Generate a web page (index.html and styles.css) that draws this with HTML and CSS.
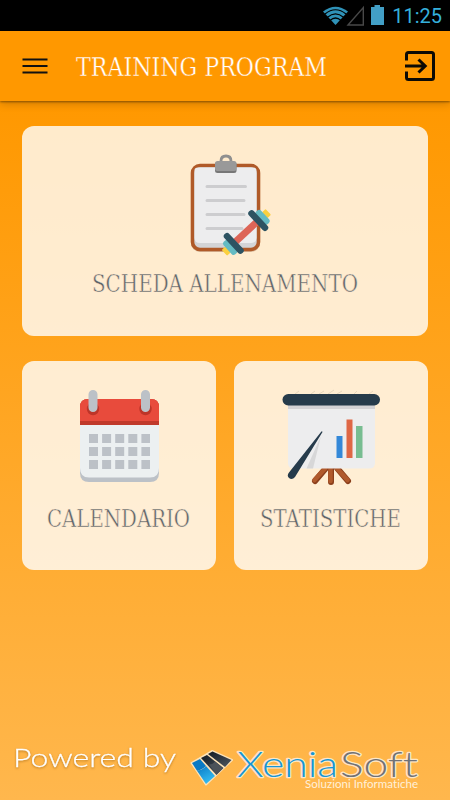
FILE: index.html
```html
<!DOCTYPE html>
<html lang="it">
<head>
    <meta charset="utf-8">
    <title>Training Program</title>
    <link rel="stylesheet" href="styles.css">
</head>
<body>
<!-- Status bar -->
<div class="status-bar">
    <svg width="70" height="30" viewBox="322 0 70 30">
        <path d="M323 11.500Q335.500 2 348 11.500L335.500 25Z" fill="#2f92b8"/>
        <g fill="none" stroke="#000" stroke-width="1.200">
            <path d="M325 14Q335.500 5.500 346 14"/>
            <path d="M327.500 17.300Q335.500 10.500 343.500 17.300"/>
            <path d="M330 20.500Q335.500 15.500 341 20.500"/>
        </g>
        <path d="M348 25L363.300 7.500V25Z" fill="none" stroke="#484848" stroke-width="1.400"/>
        <path d="M371 7H374.500V5H380V7H384V25H371Z" fill="#429fc6"/>
    </svg>
    <span class="clock">11:25</span>
</div>

<!-- Title bar -->
<div class="header">
    <svg class="menu" width="26" height="16" viewBox="0 0 26 16">
        <path d="M.5 1.500H25.500M.5 8H25.500M.5 14.500H25.500" stroke="#111" stroke-width="2"/>
    </svg>
    <svg class="title" width="264" height="40">
        <text x="1" y="30" textLength="251" lengthAdjust="spacingAndGlyphs">TRAINING PROGRAM</text>
    </svg>
    <svg class="exit" width="32" height="32" viewBox="0 0 32 32" fill="none" stroke="#0c0a05" stroke-width="3">
        <path d="M2.500 10.500V4.500Q2.500 2.500 4.500 2.500H27.500Q29.500 2.500 29.500 4.500V27.500Q29.500 29.500 27.500 29.500H4.500Q2.500 29.500 2.500 27.500V21.500"/>
        <path d="M1 16H21M14.500 9.500L21.200 16L14.500 22.500"/>
    </svg>
</div>

<div class="cards">
    <div class="card wide">
        <svg class="icon" width="100" height="120" viewBox="0 0 100 120">
            <!-- clipboard -->
            <rect x="11" y="20" width="69" height="87" rx="9" fill="#6d3512" opacity=".25"/>
            <rect x="12.500" y="20.500" width="66" height="84" rx="7.500" fill="#d3d4d6" stroke="#b05a28" stroke-width="3.600"/>
            <path d="M14.500 25Q14.500 22.500 18 22.500H73Q76.500 22.500 76.500 26V93Q76.500 98 71 98H20Q14.500 98 14.500 93Z" fill="#ededee"/>
            <path d="M41 19V16Q41 11 46 11T51 16V19" fill="none" stroke="#8f8f8f" stroke-width="2.800"/>
            <rect x="35" y="17" width="21.500" height="11" rx="2.500" fill="#777"/>
            <rect x="35" y="16" width="21.500" height="10" rx="2.500" fill="#999"/>
            <path d="M27 41.500H65.500M27 55.500H64M27 69.500H64M27 83.500H62" stroke="#cdcdcf" stroke-width="3" stroke-linecap="round"/>
            <!-- dumbbell -->
            <g transform="translate(66 87) rotate(-43)">
                <rect x="-30" y="-3.500" width="5" height="8" rx="1" fill="#fbd03f"/>
                <rect x="25" y="-3.500" width="5" height="8" rx="1" fill="#fbd03f"/>
                <rect x="-14" y="-3.500" width="28" height="7" fill="#dd6557"/>
                <rect x="-25.500" y="-8" width="7" height="17" rx="2.500" fill="#65bbc3"/>
                <rect x="18.500" y="-8" width="7" height="17" rx="2.500" fill="#65bbc3"/>
                <rect x="-20" y="-13" width="6.500" height="26" rx="3" fill="#2d5362"/>
                <rect x="13.500" y="-13" width="6.500" height="26" rx="3" fill="#2d5362"/>
            </g>
        </svg>
        <svg class="label" width="290" height="36">
            <text x="12" y="26" textLength="266" lengthAdjust="spacingAndGlyphs">SCHEDA ALLENAMENTO</text>
        </svg>
    </div>
    <div class="card">
        <svg class="icon" width="100" height="115" viewBox="0 0 100 115">
            <!-- calendar -->
            <path d="M10 85H89V93Q89 102 80 102H19Q10 102 10 93Z" fill="#bcc1c7"/>
            <path d="M10 43H89V88Q89 97.500 80 97.500H19Q10 97.500 10 88Z" fill="#ecf0f1"/>
            <path d="M10 45V27Q10 19 18 19H81Q89 19 89 27V45Z" fill="#c0392b"/>
            <path d="M10 41V27Q10 19 18 19H81Q89 19 89 27V41Z" fill="#e84b3c"/>
            <circle cx="23" cy="29" r="6.200" fill="#bd3529"/>
            <circle cx="75.500" cy="29" r="6.200" fill="#bd3529"/>
            <path d="M23 14.500V27.500M75.500 14.500V27.500" stroke="#bcc1c7" stroke-width="9" stroke-linecap="round"/>
            <path d="M19 58.500H80M19 71.500H80M19 84.500H80" stroke="#bcc1c7" stroke-width="9" stroke-dasharray="9 4.100"/>
        </svg>
        <svg class="label" width="180" height="36">
            <text x="18" y="26" textLength="143" lengthAdjust="spacingAndGlyphs">CALENDARIO</text>
        </svg>
    </div>
    <div class="card">
        <svg class="icon" width="115" height="115" viewBox="0 0 115 115">
            <!-- flip chart -->
            <path d="M51 88L40 101M56 88V102M62 88L73 101" stroke="#8b3f1c" stroke-width="6" stroke-linecap="round"/>
            <path d="M50.500 88L39.500 100M55.500 88V101M61.500 88L72.500 100" stroke="#b0592c" stroke-width="4.500" stroke-linecap="round"/>
            <path d="M13 22H100V83Q100 88.500 94 88.500H19Q13 88.500 13 83Z" fill="#ededee"/>
            <path d="M13 25H100V29H13Z" fill="#d3d2d5"/>
            <path d="M20 14L24 11M36 14L40 11M44 14L49 11M53 14L59 10M62 14L67 11M79 14L82 11M94 14L98 11" stroke="#e8d7bd"/>
            <path d="M46 56L31.500 88.500H38Z" fill="#d7d7d8"/>
            <rect x="7.500" y="14" width="97.500" height="11.500" rx="5.750" fill="#263b4b"/>
            <path d="M47.500 52L20 97Q17 100.500 14 98Q11.500 95.500 14 92.500L46 52Q47 50.500 47.500 52Z" fill="#263b4b"/>
            <path d="M61.500 56H67.500V78H61.500Z" fill="#3488d8"/>
            <path d="M71.500 39.500H77.500V78H71.500Z" fill="#df6745"/>
            <path d="M81 46H87.500V78H81Z" fill="#78bd91"/>
        </svg>
        <svg class="label" width="180" height="36">
            <text x="19" y="26" textLength="141" lengthAdjust="spacingAndGlyphs">STATISTICHE</text>
        </svg>
    </div>
</div>

<div class="footer">
    <svg class="powered" width="180" height="50">
        <text x="13" y="32" textLength="163" lengthAdjust="spacingAndGlyphs">Powered by</text>
    </svg>
    <svg class="logo" width="250" height="58" viewBox="180 742 250 58">
        <defs>
            <linearGradient id="blue" x1="0" y1="0" x2=".6" y2="1">
                <stop offset="0" stop-color="#0878c5"/>
                <stop offset="1" stop-color="#35bdf2"/>
            </linearGradient>
            <linearGradient id="dark" x1="0" y1="0" x2=".8" y2="1">
                <stop offset="0" stop-color="#121b25"/>
                <stop offset="1" stop-color="#4b535b"/>
            </linearGradient>
        </defs>
        <path d="M191.500 763L212 751L232 760L206 784.500Z" fill="#fde3b8" stroke="#fde3b8" stroke-width="2" stroke-linejoin="round"/>
        <path d="M192 763L200 759L206 766Q201 771 196.500 770Z" fill="#0879c4"/>
        <path d="M196.500 770Q202 771 206 766L215 776L206 784Z" fill="url(#blue)"/>
        <path d="M201 758L207 755L223.500 768L216.500 775Z" fill="url(#dark)"/>
        <path d="M208 754L212.500 751.500L231.500 760L225 767Z" fill="url(#dark)"/>
        <path d="M209 764.500Q213 764.500 215 761.500L223 768L216.500 774.500Z" fill="#4b5259"/>
        <text class="xenia" x="237" y="777" textLength="101" lengthAdjust="spacingAndGlyphs">Xenia</text>
        <text class="soft" x="340" y="777" textLength="78" lengthAdjust="spacingAndGlyphs">Soft</text>
        <text class="tagline" x="305" y="788" textLength="113" lengthAdjust="spacingAndGlyphs">Soluzioni Informatiche</text>
    </svg>
</div>
</body>
</html>
```
FILE: styles.css
```css
* {
    box-sizing: border-box;
}
body {
    margin: 0;
    height: 800px;
    overflow: hidden;
    display: flex;
    flex-direction: column;
    background: linear-gradient(#ff9800 100px, #ffb74d);
    font-family: Roboto, sans-serif;
}
svg {
    display: block;
    flex: none;
}
.status-bar {
    height: 31px;
    background: #000;
    display: flex;
    justify-content: flex-end;
    padding-right: 8px;
}
.clock {
    width: 50px;
    color: #35b0dc;
    font-size: 20px;
    line-height: 32px;
    text-align: right;
    white-space: nowrap;
}
.header {
    height: 70px;
    display: flex;
    align-items: center;
    padding: 0 14px 0 22px;
    background: #ff9800;
    box-shadow: 0 1px 2px rgba(0, 0, 0, .4), 0 3px 8px rgba(0, 0, 0, .18);
}
.title {
    margin-left: 27px;
    font: 25.5px "DejaVu Serif", serif;
    fill: #fff;
    stroke: #ff9800;
    stroke-width: .4px;
}
.exit {
    margin-left: auto;
}
.cards {
    display: grid;
    grid-template-columns: 1fr 1fr;
    gap: 25px 18px;
    padding: 25px 22px 0;
}
.card {
    height: 209.5px;
    border-radius: 12px;
    background: rgba(255, 255, 255, .8);
    display: flex;
    flex-direction: column;
    align-items: center;
    padding-top: 19px;
}
.card .icon {
    margin-left: 2px;
}
.wide {
    grid-column: span 2;
}
.wide .icon {
    margin-left: 10px;
}
.label {
    margin-top: 6px;
    font: 23.5px "DejaVu Serif", serif;
    fill: #5d636b;
    stroke: #ffebd0;
    stroke-width: .5px;
}
.wide .label {
    margin-top: 1px;
}
.footer {
    margin-top: auto;
    height: 65px;
    display: flex;
    align-items: flex-start;
}
.powered {
    font: 300 26px Lato, sans-serif;
    fill: #fff;
    stroke: #fff;
    stroke-width: .3px;
    filter: drop-shadow(0 1px 1px rgba(120, 70, 0, .5));
}
.logo {
    margin-top: 7px;
    font: 300 36px Lato, sans-serif;
    font-variant-ligatures: none;
}
.xenia,
.soft {
    stroke: #fee6c4;
    stroke-width: 2.6px;
    stroke-linejoin: round;
    paint-order: stroke;
}
.xenia {
    fill: #1697d5;
}
.soft {
    fill: #707277;
}
.tagline {
    font-size: 10.5px;
    font-weight: 400;
    fill: #fff0d8;
}
```
